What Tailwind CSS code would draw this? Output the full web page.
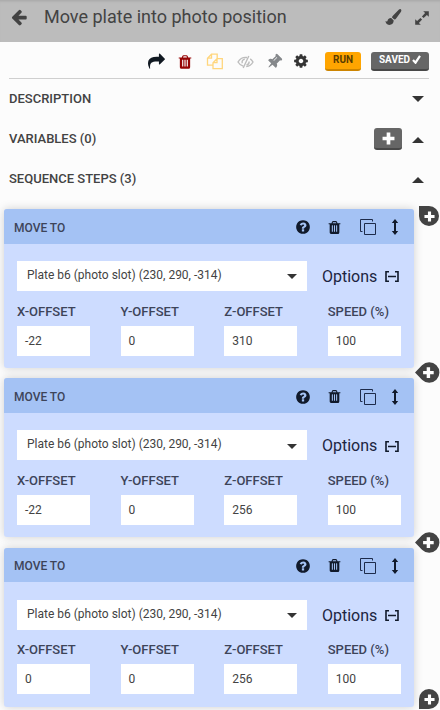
<!DOCTYPE html>
<html lang="en">
<head>
<meta charset="utf-8">
<title>Sequence editor</title>
<script src="https://cdn.jsdelivr.net/npm/@tailwindcss/browser@4"></script>
</head>
<body class="w-[440px] h-[710px] overflow-hidden bg-[#fcfcfc] font-['Roboto',sans-serif] text-[#434343]">
<svg class="hidden">
  <symbol id="trash" viewBox="0 0 1792 1792"><path d="M704 1376v-704q0-14-9-23t-23-9h-64q-14 0-23 9t-9 23v704q0 14 9 23t23 9h64q14 0 23-9t9-23zm256 0v-704q0-14-9-23t-23-9h-64q-14 0-23 9t-9 23v704q0 14 9 23t23 9h64q14 0 23-9t9-23zm256 0v-704q0-14-9-23t-23-9h-64q-14 0-23 9t-9 23v704q0 14 9 23t23 9h64q14 0 23-9t9-23zm-544-992h448l-48-117q-7-9-17-11h-317q-10 2-17 11zm928 32v64q0 14-9 23t-23 9h-96v948q0 83-47 143.5t-113 60.5h-832q-66 0-113-58.5t-47-141.5v-952h-96q-14 0-23-9t-9-23v-64q0-14 9-23t23-9h309l70-167q15-37 54-63t79-26h320q40 0 79 26t54 63l70 167h309q14 0 23 9t9 23z"/></symbol>
  <symbol id="help" viewBox="0 0 1792 1792"><path d="M1024 1376v-192q0-14-9-23t-23-9h-192q-14 0-23 9t-9 23v192q0 14 9 23t23 9h192q14 0 23-9t9-23zm256-672q0-88-55.5-163t-138.5-116-170-41q-243 0-371 213-15 24 8 42l132 100q7 6 19 6 16 0 25-12 53-68 86-92 34-24 86-24 48 0 85.5 26t37.5 59q0 38-20 61t-68 45q-63 28-115.5 86.5t-52.5 125.5v36q0 14 9 23t23 9h192q14 0 23-9t9-23q0-19 21.5-49.5t54.5-49.5q32-18 49-28.5t46-35 44.5-48 28-60.5 12.5-81zm384 192q0 209-103 385.5t-279.5 279.5-385.5 103-385.5-103-279.5-279.5-103-385.5 103-385.5 279.5-279.5 385.5-103 385.5 103 279.5 279.5 103 385.5z"/></symbol>
  <symbol id="plus" viewBox="0 0 12 12"><path d="M4.3 .5h3.4v3.8h3.8v3.4H7.7v3.8H4.3V7.7H.5V4.3h3.8z"/></symbol>
</svg>

<header class="flex h-[42px] items-center bg-[#bcbcbc] pb-[8px] pl-[10px] pr-[10px] shadow-[inset_0_3px_3px_-2px_rgba(0,0,0,0.12)]">
  <svg class="h-[18px] w-[18px] shrink-0" viewBox="0 0 1792 1792" fill="#434343"><path d="M1664 896v128q0 53-32.5 90.5t-84.5 37.5h-704l293 294q38 36 38 90t-38 90l-75 76q-37 37-90 37-52 0-91-37l-651-652q-37-37-37-90 0-52 37-91l651-650q38-38 91-38 52 0 90 38l75 74q38 38 38 91t-38 91l-293 293h704q52 0 84.5 37.5t32.5 90.5z"/></svg>
  <h1 class="ml-[16px] flex-1 whitespace-nowrap text-[18px] leading-[24px]">Move plate into photo position</h1>
  <svg class="h-[18px] w-[17px]" viewBox="0 0 17 18" fill="#434343"><path d="M15.7 1.2c.9.7.8 1.6.3 2.5L11.300 10.300c-.5.8-1.200 1.200-2 1.300L7 9.500c0-.8.4-1.500 1.100-2.100L14 1.500c.6-.5 1.200-.7 1.700-.3zM6.200 10.100l2.500 2.400c0 2.700-1.700 4.400-4.500 4.400C2 16.900.6 15.500.5 13.100c1 .7 1.600.6 2-.4.6-1.600 1.900-2.800 3.700-2.600z"/></svg>
  <svg class="ml-[12px] mt-[2px] h-[16px] w-[16px]" viewBox="0 0 16 16" fill="#434343"><path d="M9.200 1.200h5.600v5.600l-1.900-1.900-3.300 3.200-1.700-1.700 3.200-3.300zM1.200 9.200l1.900 1.900 3.300-3.200 1.700 1.700-3.200 3.300 1.900 1.900H1.200z"/></svg>
</header>

<main>
  <div class="ml-[9px] flex h-[37px] w-[420px] items-center border-b border-[#cfcfcf] pl-[139px]">
    <svg class="mt-[3px] h-[17px] w-[17px]" viewBox="0 0 1792 1792" fill="#111922"><path d="M1792 640q0 26-19 45l-512 512q-19 19-45 19t-45-19-19-45v-256h-224q-98 0-175.500 6t-154 21.500-133 42.500-105.500 69.500-80 101-48.500 138.500-17.500 181q0 55 5 123 0 6 2.500 23.500t2.500 26.500q0 15-8.500 25t-23.500 10q-16 0-28-17-7-9-13-22t-13.500-30-10.500-24q-127-285-127-451 0-199 53-333 162-403 875-403h224v-256q0-26 19-45t45-19 45 19l512 512q19 19 19 45z"/></svg>
    <svg class="ml-[12px] mt-[3px] h-[16px] w-[16px]" fill="#960404"><use href="#trash"/></svg>
    <svg class="ml-[13px] mt-[3px] h-[17px] w-[18px]" viewBox="0 0 18 17" fill="none" stroke="#ffd67d" stroke-width="1.300"><path d="M11.200 5V1.200H5.500L1.500 5.200v7h5.300M5.500 1.200v4h-4M16.300 5.700h-5.300l-4 4v6h9.300zM11 5.700v4H7"/></svg>
    <svg class="ml-[13px] mt-[3px] h-[14px] w-[17px]" viewBox="0 0 17 14" fill="none" stroke="#bdbdbd" stroke-width="1.400"><path d="M6.200 11.200C4 10.500 2.300 9.200 1 7c1.800-3 4.300-4.600 7.500-4.600l1.500.1M13.200 3.800C14.400 4.600 15.300 5.700 16 7c-1.500 2.600-3.800 4.200-6.800 4.600M11.800 1L6.200 13M5.300 8.200C4.500 6.200 5.800 4.500 7.800 4.300M9.500 10c1.800-.4 2.800-1.700 2.600-3.500"/></svg>
    <svg class="ml-[12px] mt-[3px] h-[17px] w-[17px] rotate-45" viewBox="0 0 1792 1792" fill="#85888b"><path d="M800 864v-448q0-14-9-23t-23-9-23 9-9 23v448q0 14 9 23t23 9 23-9 9-23zm672 352q0 26-19 45t-45 19h-429l-51 483q-2 12-10.500 20.500t-20.500 8.500h-1q-27 0-32-27l-76-485h-404q-26 0-45-19t-19-45q0-123 78.500-221.500t177.500-98.500v-512q-52 0-90-38t-38-90 38-90 90-38h640q52 0 90 38t38 90-38 90-90 38v512q99 0 177.500 98.500t78.500 221.500z"/></svg>
    <svg class="ml-[10px] mt-[2px] h-[16px] w-[16px]" viewBox="0 0 1792 1792" fill="#343434"><path d="M1152 896q0-106-75-181t-181-75-181 75-75 181 75 181 181 75 181-75 75-181zm512-109v222q0 12-8 23t-20 13l-185 28q-19 54-39 91 35 50 107 138 10 12 10 25t-9 23q-27 37-99 108t-94 71q-12 0-26-9l-138-108q-44 23-91 38-16 136-29 186-7 28-36 28h-222q-14 0-24.500-8.500t-11.500-21.500l-28-184q-49-16-90-37l-141 107q-10 9-25 9-14 0-25-11-126-114-165-168-7-10-7-23 0-12 8-23 15-21 51-66.500t54-70.500q-27-50-41-99l-183-27q-13-2-21-12.500t-8-23.500v-222q0-12 8-23t19-13l186-28q14-46 39-92-40-57-107-138-10-12-10-24 0-10 9-23 26-36 98.500-107.500t94.500-71.500q13 0 26 10l138 107q44-23 91-38 16-136 29-186 7-28 36-28h222q14 0 24.500 8.500t11.500 21.500l28 184q49 16 90 37l142-107q9-9 24-9 13 0 25 10 129 119 165 170 7 8 7 22 0 12-8 23-15 21-51 66.500t-54 70.500q26 50 41 98l183 28q13 2 21 12.500t8 23.500z"/></svg>
    <button class="ml-[16px] mt-[2px] h-[19px] w-[36px] shrink-0 rounded-[3px] border-b-2 border-[#cd8500] bg-[#ffa500] text-[10px] font-bold leading-[16px] text-[#5a3c00]">RUN</button>
    <button class="ml-[10px] mt-[2px] flex h-[19px] w-[58px] shrink-0 justify-center gap-[2px] rounded-[3px] border-b-2 border-[#484848] bg-[#666] text-[10px] font-bold leading-[16px] text-white">SAVED<svg class="mt-[3px] h-[9px] w-[9px]" viewBox="0 0 9 9" fill="none" stroke="#fff" stroke-width="2.200"><path d="M1 5l2.500 2.700L8 .8"/></svg></button>
  </div>

  <section class="flex h-[40px] items-center justify-between pl-[9px] pr-[16px] text-[13px] font-medium">
    <h2>DESCRIPTION</h2>
    <svg class="h-[6px] w-[12px]" viewBox="0 0 12 6" fill="#343434"><path d="M0 0h12L6 6z"/></svg>
  </section>
  <section class="flex h-[40px] items-center pl-[9px] pr-[16px] text-[13px] font-medium">
    <h2 class="flex-1">VARIABLES (0)</h2>
    <button class="mr-[10px] flex h-[22px] w-[28px] justify-center rounded-[3px] border-b-2 border-[#484848] bg-[#666] pt-[4px]"><svg class="h-[13px] w-[13px]" fill="#fff"><use href="#plus"/></svg></button>
    <svg class="mt-[2px] h-[6px] w-[12px]" viewBox="0 0 12 6" fill="#343434"><path d="M0 6h12L6 0z"/></svg>
  </section>
  <section class="flex h-[40px] items-center justify-between pl-[9px] pr-[16px] text-[13px] font-medium">
    <h2>SEQUENCE STEPS (3)</h2>
    <svg class="mt-[2px] h-[6px] w-[12px]" viewBox="0 0 12 6" fill="#343434"><path d="M0 6h12L6 0z"/></svg>
  </section>

  <div class="relative pl-[4px] pt-[10px]">
    <div id="steps" class="flex w-[410px] flex-col gap-[10.33px]"></div>
    <button class="absolute left-[419px] top-[7px] grid h-[20px] w-[20px] place-items-center rounded-full rounded-tl-none bg-[#434343]"><svg class="h-[11px] w-[11px]" fill="#fff"><use href="#plus"/></svg></button>
    <button class="absolute left-[415px] top-[163px] h-[21px] w-[25px]"><svg class="h-[21px] w-[25px]" viewBox="0 0 25 21"><path d="M0 10.500L7 3.300A10.200 10.200 0 1 1 7 17.700z" fill="#434343"/><path d="M11.700 5.300h3.400v3.600h3.600v3.400h-3.600v3.600h-3.400v-3.600H8.100V8.900h3.600z" fill="#fff"/></svg></button>
    <button class="absolute left-[415px] top-[333px] h-[21px] w-[25px]"><svg class="h-[21px] w-[25px]" viewBox="0 0 25 21"><path d="M0 10.500L7 3.300A10.200 10.200 0 1 1 7 17.700z" fill="#434343"/><path d="M11.700 5.300h3.400v3.600h3.600v3.400h-3.600v3.600h-3.400v-3.600H8.100V8.900h3.600z" fill="#fff"/></svg></button>
    <button class="absolute left-[419px] top-[490px] grid h-[20px] w-[20px] place-items-center rounded-full rounded-bl-none bg-[#434343]"><svg class="h-[11px] w-[11px]" fill="#fff"><use href="#plus"/></svg></button>
  </div>
</main>

<template id="step">
  <article class="h-[159px] rounded-[3px] bg-[#cddcff] text-[#3d4459] shadow-[0_0_10px_rgba(0,0,0,0.18)]">
    <header class="flex h-[34.670px] items-center rounded-t-[3px] bg-[#a4c2f4] pl-[10px] pr-[15px] pt-[2px]">
      <h3 class="flex-1 pt-px text-[12px] font-medium">MOVE TO</h3>
      <svg class="h-[16px] w-[16px]" fill="#111a2b"><use href="#help"/></svg>
      <svg class="ml-[16px] h-[15px] w-[15px]" fill="#111a2b"><use href="#trash"/></svg>
      <svg class="ml-[18px] h-[16px] w-[16px]" viewBox="0 0 16 16" fill="none" stroke="#1d2b4a" stroke-width="1"><path d="M4.500 4.500h11v11h-11zM2.500 12.500h-2v-12h12v2"/></svg>
      <svg class="ml-[15px] h-[16px] w-[8px]" viewBox="0 0 8 16" fill="#111a2b"><path d="M4 0l3.200 4H5v8h2.200L4 16 .8 12H3V4H.8z"/></svg>
    </header>
    <div class="px-[13px] pt-[17.330px]">
      <div class="flex h-[30px] items-center">
        <div class="flex h-[30px] w-[290px] items-center justify-between bg-white pl-[10px] pr-[10px] text-[12px] text-[#434343]">
          <span class="pb-[2px]">Plate b6 (photo slot) (230, 290, -314)</span>
          <svg class="mt-[2px] h-[5px] w-[10px]" viewBox="0 0 10 5" fill="#343434"><path d="M0 0h10L5 5z"/></svg>
        </div>
        <span class="ml-[15px] pt-[2px] text-[16px] text-[#1c2541]">Options</span>
        <svg class="ml-[8px] mt-[2px] h-[11px] w-[14px]" viewBox="0 0 14 11" fill="none" stroke="#111a2b" stroke-width="1.600"><path d="M4 .8H1v9.400h3M10 .8h3v9.400h-3M3 5.500h8"/></svg>
      </div>
      <div class="mt-[12.670px] flex gap-[30.300px]" data-fields></div>
    </div>
  </article>
</template>
<template id="field">
  <label class="flex w-[73.400px] flex-col gap-[6px] whitespace-nowrap text-[13px] font-medium leading-[16px]"><span></span><b class="flex h-[30px] items-center bg-white pl-[8px] text-[12px] font-normal text-[#434343]"></b></label>
</template>
<script>
  const names = ['X-OFFSET', 'Y-OFFSET', 'Z-OFFSET', 'SPEED (%)'];
  const steps = [['-22', '0', '310', '100'], ['-22', '0', '256', '100'], ['0', '0', '256', '100']];
  for (const values of steps) {
    const card = document.getElementById('step').content.cloneNode(true);
    values.forEach((value, i) => {
      const field = document.getElementById('field').content.cloneNode(true);
      field.querySelector('span').textContent = names[i];
      field.querySelector('b').textContent = value;
      card.querySelector('[data-fields]').append(field);
    });
    document.getElementById('steps').append(card);
  }
</script>
</body>
</html>
